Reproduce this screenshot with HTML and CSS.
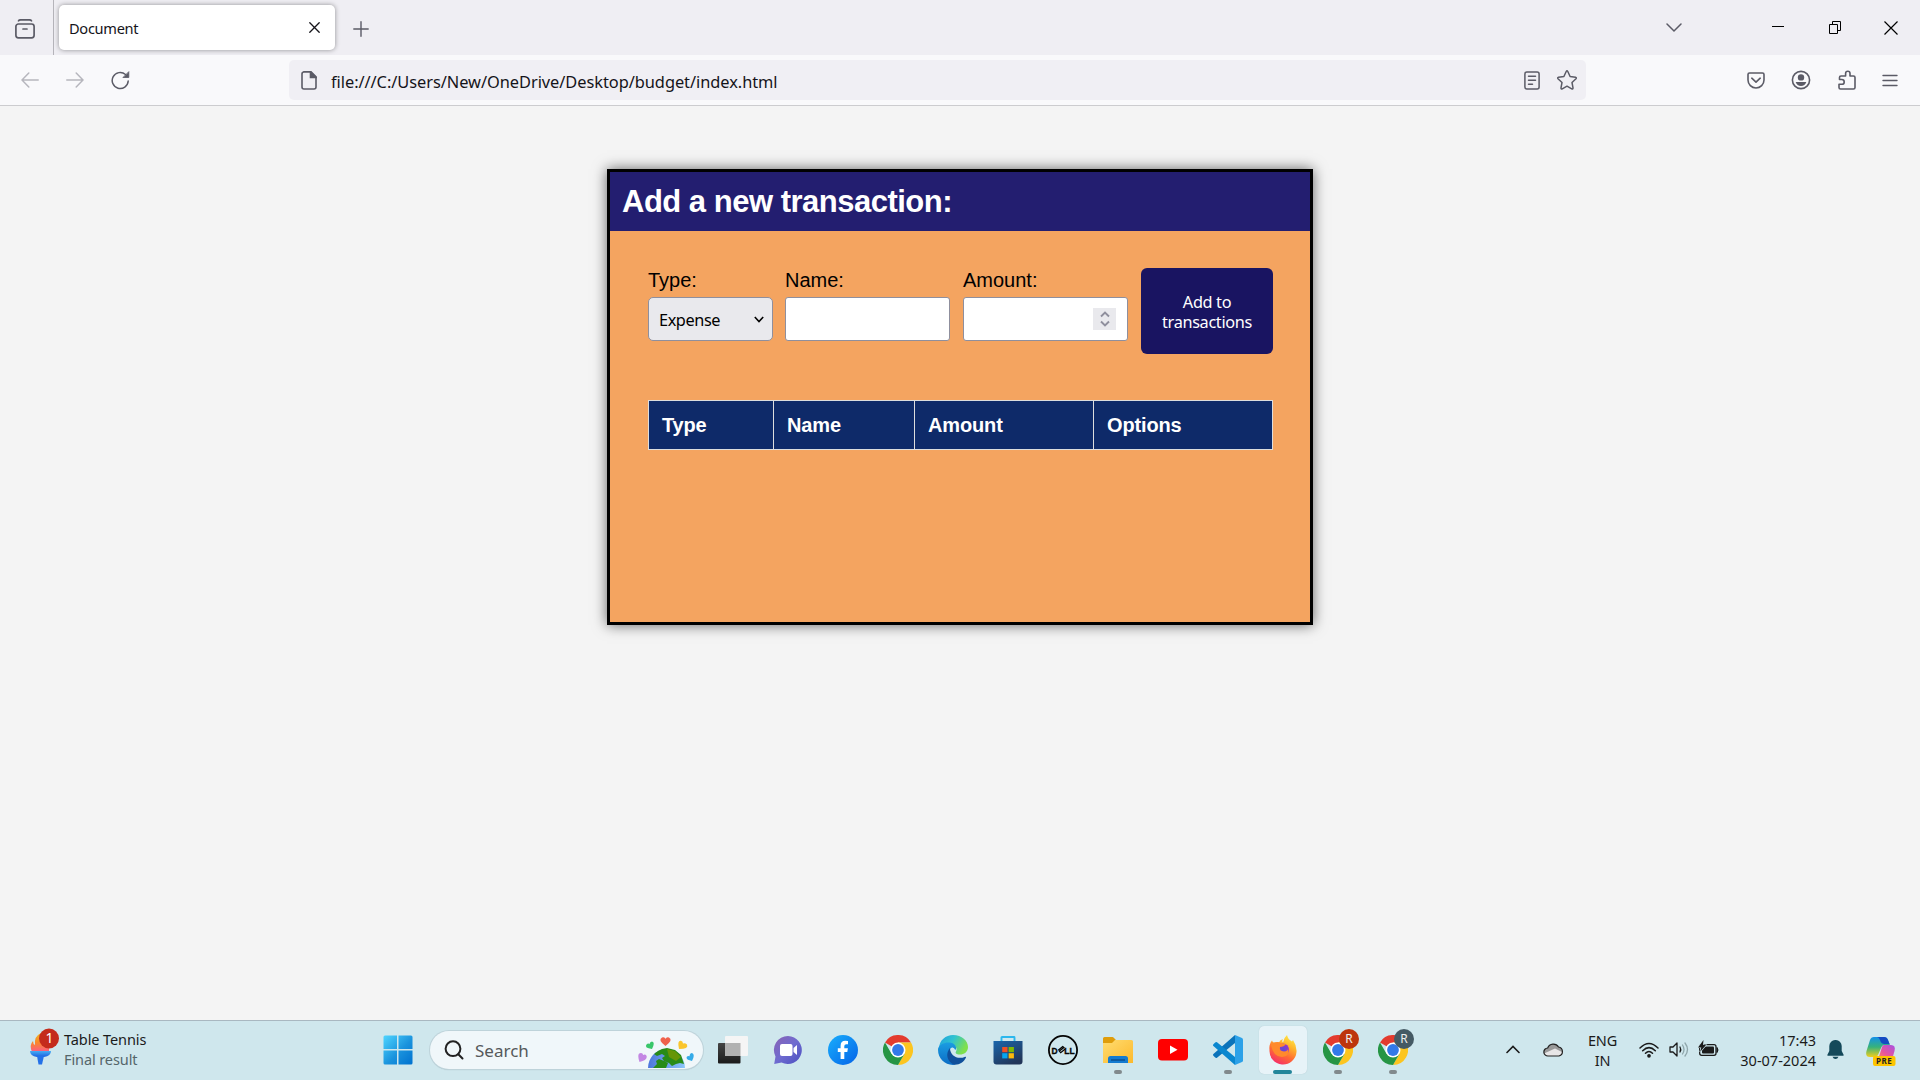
FILE: index.html
```html
<!DOCTYPE html>
<html lang="en">
<head>
<meta charset="utf-8">
<title>Document</title>
<link rel="stylesheet" href="styles.css">
</head>
<body>
<svg class="defs" width="0" height="0" aria-hidden="true">
  <defs>
    <linearGradient id="win" x1="0" y1="0" x2="1" y2="1"><stop offset="0" stop-color="#4fd5ff"/><stop offset=".55" stop-color="#1a93dd"/><stop offset="1" stop-color="#0071cf"/></linearGradient>
    <linearGradient id="flame" x1="0" y1="0" x2="0" y2="1"><stop offset="0" stop-color="#f0b422"/><stop offset=".5" stop-color="#f9882b"/><stop offset="1" stop-color="#fb5a88"/></linearGradient>
    <linearGradient id="torch" x1="0" y1="0" x2="0" y2="1"><stop offset="0" stop-color="#46adf5"/><stop offset="1" stop-color="#1c5fe0"/></linearGradient>
    <linearGradient id="chat" x1="0" y1="0" x2="1" y2="1"><stop offset="0" stop-color="#8a63b4"/><stop offset=".5" stop-color="#6f6bd0"/><stop offset="1" stop-color="#4b4fc0"/></linearGradient>
    <linearGradient id="fb" x1="0" y1="0" x2="1" y2="1"><stop offset="0" stop-color="#18aefc"/><stop offset="1" stop-color="#0563e8"/></linearGradient>
    <linearGradient id="edge1" x1="0" y1="0" x2="1" y2=".4"><stop offset="0" stop-color="#1f9fe0"/><stop offset=".5" stop-color="#30c3d0"/><stop offset="1" stop-color="#7fe04c"/></linearGradient>
    <linearGradient id="edge2" x1="0" y1="0" x2="0" y2="1"><stop offset="0" stop-color="#1b9de2"/><stop offset="1" stop-color="#0c6cc4"/></linearGradient>
    <linearGradient id="store" x1="0" y1="0" x2=".6" y2="1"><stop offset="0" stop-color="#1a66ac"/><stop offset="1" stop-color="#223659"/></linearGradient>
    <linearGradient id="folder" x1="0" y1="0" x2="1" y2="1"><stop offset="0" stop-color="#ffdc70"/><stop offset="1" stop-color="#fcb92c"/></linearGradient>
    <linearGradient id="dark" x1="0" y1="0" x2="0" y2="1"><stop offset="0" stop-color="#444"/><stop offset="1" stop-color="#1b1b1b"/></linearGradient>
    <linearGradient id="fox" x1=".8" y1="0" x2=".3" y2="1"><stop offset="0" stop-color="#fff04a"/><stop offset=".35" stop-color="#ffb22b"/><stop offset=".65" stop-color="#ff6a33"/><stop offset="1" stop-color="#f42c6c"/></linearGradient>
    <radialGradient id="foxcore"><stop offset="0" stop-color="#5a4bd8"/><stop offset="1" stop-color="#9a35c9"/></radialGradient>
    <linearGradient id="ocean" x1="0" y1="0" x2="1" y2="0"><stop offset="0" stop-color="#4c76dc"/><stop offset="1" stop-color="#8cc6fa"/></linearGradient>
    <linearGradient id="cop1" x1="0" y1="0" x2="0" y2="1"><stop offset="0" stop-color="#1491e8"/><stop offset=".5" stop-color="#36b27b"/><stop offset="1" stop-color="#f0cf1e"/></linearGradient>
    <linearGradient id="cop2" x1="1" y1="0" x2="0" y2="1"><stop offset="0" stop-color="#a851e3"/><stop offset=".6" stop-color="#e8569b"/><stop offset="1" stop-color="#fb8a5c"/></linearGradient>
    <symbol id="chrome" viewBox="0 0 30 30">
      <path d="M15 15 2 7.500A15 15 0 0 1 28 7.500H15Z" fill="#e33b2e"/>
      <path d="M28 7.500A15 15 0 0 1 15 30L21.500 18.700 15 7.500Z" fill="#fcc520"/>
      <path d="M2 7.500A15 15 0 0 0 15 30L21.500 18.700 15 15 8.500 18.700Z" fill="#269545"/>
      <circle cx="15" cy="15" r="7.500" fill="#fff"/><circle cx="15" cy="15" r="5.900" fill="#3379e8"/>
    </symbol>
  </defs>
</svg>

<div class="window">
  <header class="tabs">
    <div class="view">
      <svg width="20" height="20" viewBox="0 0 20 20" fill="none" stroke="#5b5b66" stroke-width="1.700" stroke-linecap="round"><rect x=".9" y="5" width="18.200" height="13.800" rx="2.500"/><path d="M8 10h4M3.500 1.800Q4 .9 5.500.9h9q1.500 0 2 .9"/></svg>
    </div>
    <div class="tab">
      <span class="tab-title">Document</span>
      <svg width="11" height="11" viewBox="0 0 11 11" stroke="#15141a" stroke-width="1.300" stroke-linecap="round"><path d="M.8.8l9.400 9.400M10.200.8.8 10.200"/></svg>
    </div>
    <svg class="plus" width="16" height="16" viewBox="0 0 16 16" stroke="#5b5b66" stroke-width="1.400" stroke-linecap="round"><path d="M8 .8v14.400M.8 8h14.400"/></svg>
    <div class="controls">
      <svg width="16" height="10" viewBox="0 0 16 10" fill="none" stroke="#5b5b66" stroke-width="1.500" stroke-linecap="round"><path d="M1 1l7 7 7-7"/></svg>
      <svg class="minimize" width="12" height="13" viewBox="0 0 12 13" stroke="#000"><path d="M0 5.500h12"/></svg>
      <svg class="restore" width="12" height="13" viewBox="0 0 12 13" fill="none" stroke="#000"><path d="M.5 3.500h8v9h-8zM3.500 3.500v-3h8v9h-3"/></svg>
      <svg width="14" height="14" viewBox="0 0 14 14" stroke="#000" stroke-width="1.200"><path d="M.5.500l13 13M13.500.500l-13 13"/></svg>
    </div>
  </header>

  <nav class="toolbar">
    <div class="history">
      <svg width="18" height="16" viewBox="0 0 18 16" fill="none" stroke="#b6b6bd" stroke-width="1.500" stroke-linecap="round"><path d="M17.200 8H1M7.800 1 1 8l6.800 7"/></svg>
      <svg width="18" height="16" viewBox="0 0 18 16" fill="none" stroke="#b6b6bd" stroke-width="1.500" stroke-linecap="round"><path d="M.8 8H17M10.200 1 17 8l-6.800 7"/></svg>
      <svg width="19" height="19" viewBox="0 0 19 19" fill="none" stroke="#5b5b66" stroke-width="1.500" stroke-linecap="round"><path d="M17.200 10A8 8 0 1 1 14.500 3.500"/><path d="M17.800 1v5.500h-5.500z" fill="#5b5b66" stroke-width=".8"/></svg>
    </div>
    <div class="address">
      <svg width="16" height="19" viewBox="0 0 16 19" fill="none" stroke="#5b5b66" stroke-width="1.600"><path d="M3 .9h7l5 5V16a2 2 0 0 1-2 2H3a2 2 0 0 1-2-2V3a2 2 0 0 1 2-2z"/><path d="M9.500 1v5.500H15z" fill="#5b5b66"/></svg>
      <span class="url">file:///C:/Users/New/OneDrive/Desktop/budget/index.html</span>
      <svg class="reader" width="16" height="19" viewBox="0 0 16 19" fill="none" stroke="#5b5b66" stroke-width="1.500" stroke-linecap="round"><rect x=".9" y="1" width="14.200" height="17" rx="2"/><path d="M4.500 5.200h7M4.500 9.200h7M4.500 13.200h4"/></svg>
      <svg width="20" height="20" viewBox="0 0 20 20" fill="none" stroke="#5b5b66" stroke-width="1.500" stroke-linejoin="round"><path d="M9.200 1.500q.8-1.400 1.600 0l2.300 5 5.400.7q1.400.4.500 1.500l-4 3.800 1 5.400q0 1.400-1.300.9L10 16.200l-4.700 2.600q-1.300.500-1.300-.9l1-5.400-4-3.800q-.9-1.100.5-1.500l5.400-.7z"/></svg>
    </div>
    <div class="tools">
      <svg width="18" height="17" viewBox="0 0 18 17" fill="none" stroke="#5b5b66" stroke-width="1.600" stroke-linecap="round" stroke-linejoin="round"><path d="M2.500 1h13Q17 1 17 2.500V8A8 8 0 0 1 1 8V2.500Q1 1 2.500 1zM4.800 6.200 9 10.200l4.200-4"/></svg>
      <svg width="20" height="20" viewBox="0 0 20 20"><circle cx="10" cy="10" r="8.600" fill="none" stroke="#5b5b66" stroke-width="1.600"/><circle cx="10" cy="7.400" r="3.200" fill="#5b5b66"/><path d="M4.700 12h10.600q-1.300 4-5.300 4t-5.300-4z" fill="#5b5b66"/></svg>
      <svg width="18" height="20" viewBox="0 0 18 20" fill="none" stroke="#5b5b66" stroke-width="1.600" stroke-linejoin="round"><path d="M2.500 19h13q1.500 0 1.500-1.500v-10Q17 6 15.500 6H12V3.500a2.200 2.200 0 0 0-4.400 0V6H3Q1.500 6 1.500 7.500V9.500H3.800a2.300 2.300 0 0 1 0 4.800H1v3.200Q1 19 2.500 19z"/></svg>
      <svg width="16" height="13" viewBox="0 0 16 13" stroke="#5b5b66" stroke-width="1.400" stroke-linecap="round"><path d="M1 1.500h14M1 6.500h14M1 11.500h14"/></svg>
    </div>
  </nav>

  <main class="page">
    <section class="card">
      <h1 class="card-title">Add a new transaction:</h1>
      <div class="card-body">
        <form class="entry">
          <label class="field type">Type:
            <span class="control select">Expense
              <svg width="10" height="7" viewBox="0 0 10 7" fill="none" stroke="#000" stroke-width="1.600"><path d="M.8 1 5 5.500 9.200 1"/></svg>
            </span>
          </label>
          <label class="field">Name:<span class="control"></span></label>
          <label class="field">Amount:
            <span class="control number"><span class="spinner">
              <svg width="10" height="16" viewBox="0 0 10 16" fill="none" stroke="#8f8f9d" stroke-width="1.900"><path d="M1 5.500 5 1.500l4 4M1 10.500l4 4 4-4"/></svg>
            </span></span>
          </label>
          <button class="add" type="button">Add to<br>transactions</button>
        </form>
        <table class="list">
          <tr><th class="c1">Type</th><th class="c2">Name</th><th class="c3">Amount</th><th class="c4">Options</th></tr>
        </table>
      </div>
    </section>
  </main>

  <footer class="taskbar">
    <div class="widget">
      <svg width="32" height="38" viewBox="0 0 32 38">
        <path d="M3 24Q0 17 4 13q0 3 2 4Q5 8 12 5l8 2v17z" fill="url(#flame)"/>
        <path d="M1 23h21q0 5-7 6H8q-7-1-7-6z" fill="url(#torch)"/><path d="M8 28h7l-2 8.500H9.500z" fill="#2471e8"/>
        <circle cx="20" cy="10.500" r="10" fill="#c42b1c"/><text x="20.500" y="15" class="count">1</text>
      </svg>
      <div class="news"><span class="headline">Table Tennis</span><span class="sub">Final result</span></div>
    </div>

    <div class="apps">
      <div class="app"><svg width="30" height="30" viewBox="0 0 30 30"><path d="M2 .5h12v13.500H.5V2Q.5.500 2 .5zM15.500.500h12.500q1.500 0 1.500 1.500v12h-14zM.5 15.500H14v14H2Q.5 29.500.500 28zM15.500 15.500h14V28q0 1.500-1.500 1.500H15.500z" fill="url(#win)"/></svg></div>
      <div class="search">
        <svg class="lens" width="20" height="20" viewBox="0 0 20 20" fill="none" stroke="#222" stroke-width="2" stroke-linecap="round"><circle cx="9" cy="8.700" r="7.400"/><path d="M14.300 14.300 18.500 18.500"/></svg>
        <span class="search-label">Search</span>
        <svg width="58" height="32" viewBox="0 0 58 32">
          <path d="M11 32A18.500 19 0 0 1 48 32z" fill="url(#ocean)"/>
          <path d="M17 18l4-3 4-2 5-1 8 2 6 5 3 9-4-1-4 1-4 2-3-3-5-2-2-3 3-2-3-2-5 2zM16 32l4-4-1-3 3-2 5 2 4 2-2 5z" fill="#288b18"/><path d="M30 13l8 2 6 6-5 4-7-4z" fill="#669607"/>
          <g id="hearts">
            <path d="M28.500 10q-8-6-3.500-8.500 2-.8 3.500 1.200Q30.200.7 32 1.500q4.500 2.500-3.500 8.500z" fill="#f0614c"/>
            <path d="M15 13q-8-1-5.500-4.500Q11 7 12.500 8q.5-2.500 2.500-2.500 3.500.5 0 7.500z" fill="#38c66a"/>
            <path d="M42 13q-2-8.500 1.800-8.200 2 .2 2.200 2.700 2-1 4 1 2 4.500-8 4.500z" fill="#fac52d"/>
            <path d="M2.500 26q-3-9 1.500-9 1.800.2 2.200 2 2-1.200 3.300.8Q11 24 2.500 26z" fill="#c387e3"/>
            <path d="M55 25q-7-1.200-5-4.500 1.200-1 2.500-.2.500-3.300 2.500-3.200 3.500 1.400 0 7.900z" fill="#35abe8"/>
          </g>
        </svg>
      </div>
      <div class="app"><svg width="30" height="30" viewBox="0 0 30 30"><rect x="0" y="8" width="22.500" height="20.500" rx="1" fill="url(#dark)"/><rect x="7" y="1" width="23" height="20" rx="1" fill="#f5f5f5"/><path d="M7 8h15.500v13H7z" fill="#b1b1b1"/></svg></div>
      <div class="app"><svg width="30" height="30" viewBox="0 0 30 30"><path d="M15 1a14 14 0 1 1-6.500 26.500L1.200 29 2.500 21.500A14 14 0 0 1 15 1z" fill="url(#chat)"/><rect x="7" y="9" width="12.500" height="12" rx="2" fill="#fff"/><path d="M20.500 13l3.500-3v10l-3.500-3z" fill="#fff"/></svg></div>
      <div class="app"><svg width="30" height="30" viewBox="0 0 30 30"><circle cx="15" cy="15" r="15" fill="url(#fb)"/><path d="M12.600 24v-7H9.800v-3.700h2.800v-2.500q0-5 4.700-5 1.700 0 2.700.3v3.200h-1.700q-2 0-2 1.800v2.200h3.600l-.6 3.700h-3v7z" fill="#fff"/></svg></div>
      <div class="app"><svg width="30" height="30"><use href="#chrome"/></svg></div>
      <div class="app"><svg width="30" height="30" viewBox="0 0 30 30"><path d="M1 14C1 5 8 0 15 0c9 0 15 6 15 12 0 5-4 7.500-8 7.500-4 0-5-1.500-4-3 2-3-1-7-5-7-5 0-10 2-12 4.500z" fill="url(#edge1)"/><path d="M.1 13.500C2 6.500 16 5 18 12q.4 2-.8 3-1-3-3.200-2.500c-5 2-3 11 2 15l1 2.300C7 31-.8 23 .1 13.500z" fill="url(#edge2)"/><path d="M12 13c-6 7-1 15.500 5 16.800 5-.2 9-3 11-7.300q.3-1-.8-.8C20 25 12 21 12 13z" fill="#10509b"/></svg></div>
      <div class="app"><svg width="30" height="30" viewBox="0 0 30 30"><path d="M8.500 7V2.500Q8.500 2 9 2h12q.5 0 .5.500V7" fill="none" stroke="#2bb7ed" stroke-width="1.900"/><path d="M.5 6h29v20.500q0 3-3 3h-23q-3 0-3-3z" fill="url(#store)"/><path d="M9.200 12h5.300v5.200H9.200z" fill="#f15124"/><path d="M15.600 12h5.300v5.200h-5.300z" fill="#7fb901"/><path d="M9.200 18.200h5.300v5.200H9.200z" fill="#05a5f0"/><path d="M15.600 18.200h5.300v5.200h-5.300z" fill="#fdb90b"/></svg></div>
      <div class="app"><svg width="30" height="30" viewBox="0 0 30 30" fill="none" stroke="#050505"><circle cx="15" cy="15" r="14.100" stroke-width="1.800"/><text x="3.500" y="18.500" class="dell">D</text><text x="16.200" y="18.500" class="dell">LL</text><path d="M10.200 15.200l4.500-3.700 1.200.9-4.500 3.700 1.300 1.600 4.500-3.700" stroke-width="1.300"/></svg></div>
      <div class="app running"><svg width="30" height="30" viewBox="0 0 30 30"><path d="M0 3.500Q0 2 1.500 2h8q1 0 2 1.500L13 5v5H0z" fill="#df9d0b"/><path d="M0 8h9l3-3h16.500Q30 5 30 6.500V28H0z" fill="url(#folder)"/><path d="M5 28v-4.500Q5 21 7.500 21h15q2.500 0 2.500 2.500V28z" fill="#147bd0"/><path d="M8 25h14" stroke="#0b4f91" stroke-width="1.500"/></svg></div>
      <div class="app"><svg width="30" height="30" viewBox="0 0 30 30"><rect y="4" width="30" height="21.500" rx="4" fill="#f00"/><path d="M12 10.500v8.500l7.500-4.200z" fill="#fff"/></svg></div>
      <div class="app running"><svg width="30" height="30" viewBox="0 0 30 30"><path d="M22 0v8L4 22.800q-1 .6-1.800-.2L.4 20.800q-.8-1 0-1.800z" fill="#0b73ba"/><path d="M22 30v-8L4 7.200Q3 6.600 2.200 7.400L.4 9.200q-.8 1 0 1.800z" fill="#0a87cf"/><path d="M22 0l7 3q1 .5 1 1.500v21q0 1-1 1.500l-7 3z" fill="#2ca1e8"/></svg></div>
      <div class="app active"><svg width="30" height="30" viewBox="0 0 30 30"><path d="M1.500 15C1 11 2 8 4 5.500q.5 2 2 2 2-.5 5 0Q12 4.500 15 4q-1.500 2 0 3.500 1-5 4-7.500 1 4.500 5 6.500l1-1.500q4 6 3.500 12a13.500 13.500 0 0 1-27-2z" fill="url(#fox)"/><circle cx="15" cy="14.500" r="6" fill="url(#foxcore)"/><path d="M3 10q5-5 10-2 2 1 5 1-2 3-6 3-1 4 4 4.500 4-.5 4-3 2 8-6 8.500-9-.5-11-12z" fill="#ff8a2c"/></svg></div>
      <div class="app running"><svg width="30" height="30"><use href="#chrome"/></svg><span class="profile red">R</span></div>
      <div class="app running"><svg width="30" height="30"><use href="#chrome"/></svg><span class="profile slate">R</span></div>
    </div>

    <div class="tray">
      <svg class="up" width="14" height="9" viewBox="0 0 14 9" fill="none" stroke="#1b1b1b" stroke-width="1.600" stroke-linecap="round"><path d="M1 7.500l6-6 6 6"/></svg>
      <svg class="cloud" width="21" height="15" viewBox="0 0 21 15"><path d="M5 14a4 4 0 0 1-.3-8A6 6 0 0 1 15.500 5 4.600 4.600 0 0 1 16 14z" fill="#999"/><path d="M5 14q-3-.3-4-2.500l11-5 8 4q-.5 3.300-4 3.500z" fill="#e8e6e7"/><path d="M5 14a4 4 0 0 1-.3-8A6 6 0 0 1 15.500 5 4.600 4.600 0 0 1 16 14z" fill="none" stroke="#222" stroke-width="1.200"/></svg>
      <div class="lang"><span>ENG</span><span>IN</span></div>
      <div class="status">
        <svg width="20" height="16" viewBox="0 0 20 16" fill="none" stroke="#1b1b1b" stroke-width="1.500" stroke-linecap="round"><path d="M1 6q9-9 18 0M3.700 8.800q6.300-6.300 12.600 0M6.500 11.300q3.500-3.500 7 0"/><circle cx="10" cy="13.800" r="1.100" fill="#1b1b1b"/></svg>
        <svg width="20" height="17" viewBox="0 0 20 17" fill="none" stroke="#1b1b1b" stroke-width="1.300" stroke-linecap="round" stroke-linejoin="round"><path d="M1 6h3l4-4v13l-4-4H1zM11 6q1.500 2.500 0 5"/><path d="M13.500 4q3 4.500 0 9M16 2q5 6.500 0 13" stroke="#8fa6ab"/></svg>
        <svg class="battery" width="21" height="18" viewBox="0 0 21 18"><rect x="1.700" y="4.700" width="16.300" height="10.600" rx="2" fill="none" stroke="#1b1b1b" stroke-width="1.300"/><rect x="4" y="6.500" width="12" height="7" rx="1" fill="#1b1b1b"/><path d="M19 7.500q2 2.500 0 5z" fill="#1b1b1b" stroke="#1b1b1b"/><path d="M5.500 0 0 7.500h3.300L2 12l6-7H5z" fill="#1b1b1b" stroke="#cfe7ed" stroke-width="1.200" paint-order="stroke"/></svg>
      </div>
      <div class="clock"><span class="time">17:43</span><span class="date">30-07-2024</span></div>
      <svg class="bell" width="17" height="19" viewBox="0 0 17 19"><path d="M8.500 0a6 6 0 0 1 6.200 6v5l2 4q.2.700-.7.700H1q-.9 0-.7-.7l2-4V6a6 6 0 0 1 6.200-6zM5.500 16.700h6q-1 2.300-3 2.300t-3-2.300z" fill="#15495a"/></svg>
      <svg class="copilot" width="30" height="29" viewBox="0 0 30 29"><path d="M8 0h10q3 0 4 3l2 5h-5q-3 0-4 3l-3 7q-1 2-3 2H4q-5 0-3.500-6L4 3Q5 0 8 0z" fill="url(#cop1)"/><path d="M11 0h7q3 0 4 3l1.500 4h-5Q15 7 14 3 13 0 11 0z" fill="#154ac2"/><path d="M18 8h7q5 0 3.500 6l-2 7H11q2-1 2.500-3L16 10q.5-2 2-2z" fill="url(#cop2)"/><rect x="7" y="19" width="22.500" height="10" rx="2" fill="#fdc500"/><text x="18.200" y="27" class="pre">PRE</text></svg>
    </div>
  </footer>
</div>
</body>
</html>
```
FILE: styles.css
```css
* { box-sizing: border-box; }
body { margin: 0; font-family: "Noto Sans", "Open Sans", sans-serif; color: #15141a; }
svg { display: block; flex: none; }
.defs { position: absolute; }
.window { width: 1920px; height: 1080px; display: flex; flex-direction: column; overflow: hidden; background: #f4f4f4; }

.tabs { height: 55px; background: #efeef3; display: flex; align-items: center; }
.view { width: 54px; height: 55px; border-right: 1px solid #b5b4ba; display: flex; align-items: center; padding: 2px 0 0 15px; }
.tab { width: 276px; height: 45px; margin: 0 0 0 5px; padding: 0 15px 0 10px; border-radius: 5px; background: #fff; box-shadow: 0 0 5px rgba(0, 0, 0, .4); display: flex; align-items: center; justify-content: space-between; }
.tab-title { font-size: 14.600px; letter-spacing: -.3px; padding-top: 1px; }
.plus { margin: 2px 0 0 18px; }
.controls { margin-left: auto; padding-right: 22px; display: flex; align-items: center; }
.minimize { margin-left: 90px; }
.restore { margin: 0 43px 0 45px; }

.toolbar { height: 51px; background: #f9f9fb; border-bottom: 1px solid #cccccf; display: flex; align-items: center; }
.history { width: 289px; padding-left: 21px; display: flex; align-items: center; gap: 27px; }
.address { width: 1297px; height: 40px; border-radius: 5px; background: #f0eff4; display: flex; align-items: center; padding: 0 9px 0 12px; }
.url { font-size: 16.400px; letter-spacing: -.05px; margin-left: 14px; padding-top: 3px; white-space: nowrap; }
.reader { margin: 0 17px 0 auto; }
.tools { margin-left: auto; padding-right: 22px; display: flex; align-items: center; gap: 26.500px; }

.page { flex: 1; padding-top: 63px; background: #f4f4f4; }
.card { width: 706px; height: 456px; margin: 0 auto; border: 3px solid #000; background: #f4a460; box-shadow: 0 0 13px rgba(0, 0, 0, .6); font-family: "Liberation Sans", Arial, sans-serif; color: #000; }
.card-title { margin: 0; height: 59px; padding: 0 12px; background: #231e70; color: #fff; font-size: 31px; letter-spacing: -.5px; line-height: 59px; }
.card-body { padding: 37px 37px 0 38px; }
.entry { display: flex; gap: 13px; height: 132px; align-items: flex-start; }
.field { width: 165px; font-size: 20px; line-height: 24px; display: flex; flex-direction: column; gap: 5px; white-space: nowrap; }
.field.type { width: 125px; margin-right: -1px; }
.control { height: 44px; border: 1px solid #8f8f9d; border-radius: 3px; background: #fff; display: flex; align-items: center; }
.select { background: #e9e9ed; border-radius: 5px; padding: 1px 8px 0 10px; justify-content: space-between; font: 16.300px "Noto Sans", sans-serif; letter-spacing: -.4px; }
.number { justify-content: flex-end; padding-right: 11px; }
.spinner { width: 23px; height: 22px; background: #e9e9ed; display: flex; align-items: center; justify-content: center; }
.add { width: 132px; height: 86px; padding: 2px 0 0; border: 0; border-radius: 6px; background: #191461; color: #fff; font: 16.300px/20px "Noto Sans", sans-serif; letter-spacing: -.35px; }
.list { width: 625px; table-layout: fixed; border-collapse: collapse; }
.list th { height: 49px; border: 1px solid #ddd; background: #0e2a69; color: #fff; padding: 0 12px 0 13px; font-size: 20px; letter-spacing: -.15px; line-height: 24px; text-align: left; }
.c1 { width: 125px; } .c2 { width: 141px; } .c3 { width: 179px; } .c4 { width: 179px; }

.taskbar { height: 60px; border-top: 1px solid #a9b8c1; background: #cfe7ed; display: flex; color: #1b1b1b; }
.widget { width: 370px; padding: 7px 0 0 29px; display: flex; gap: 3px; }
.count { font: 14px "Noto Sans", sans-serif; fill: #fff; text-anchor: middle; }
.news { display: flex; flex-direction: column; font-size: 14.500px; letter-spacing: -.1px; line-height: 20px; padding-top: 1px; }
.sub { color: #55666b; }
.apps { display: flex; height: 58px; align-items: center; }
.app { position: relative; width: 55px; height: 58px; display: flex; align-items: center; justify-content: center; }
.search { width: 273px; height: 38px; margin: 0 2px 0 5px; border-radius: 20px; background: #f0f7fa; box-shadow: 0 0 0 1px #bed3da, 0 1px 1px #9eb5bd; display: flex; align-items: center; padding: 0 8px 0 14px; }
.search svg:last-child { margin: 3px 0 0 auto; }
.search-label { font-size: 17px; margin-left: 11px; color: #55595b; }
.dell { font: bold 8.500px "Liberation Sans", sans-serif; fill: #050505; stroke-width: .3px; }
.running::after, .active::after { content: ""; position: absolute; bottom: 5px; width: 8px; height: 4px; border-radius: 2px; background: #818a8d; }
.active::before { content: ""; position: absolute; inset: 5px 3px 5px 4px; border-radius: 5px; background: #e7f3f8; box-shadow: 0 0 1px #a9c1ca; }
.active svg { position: relative; }
.active::after { width: 19px; background: #23869a; }
.profile { position: absolute; left: 29px; top: 8px; width: 20px; height: 20px; border-radius: 50%; color: #eee; font-size: 12px; line-height: 20px; text-align: center; }
.red { background: #bd350d; }
.slate { background: #455a64; }
.tray { height: 57px; margin-left: auto; padding-right: 24px; display: flex; align-items: center; font-size: 14.500px; line-height: 20px; }
.cloud { margin: 0 24px 0 23px; }
.lang { width: 29px; display: flex; flex-direction: column; align-items: center; letter-spacing: -.2px; }
.status { margin-left: 22px; display: flex; align-items: center; gap: 9.500px; }
.battery { margin-top: -1px; }
.clock { width: 77px; margin-left: 20px; display: flex; flex-direction: column; align-items: flex-end; white-space: nowrap; }
.bell { margin: 0 22px 0 11px; }
.copilot { margin-top: 3px; }
.pre { font: bold 8px "Noto Sans", sans-serif; letter-spacing: .5px; text-anchor: middle; fill: #222; }
```
